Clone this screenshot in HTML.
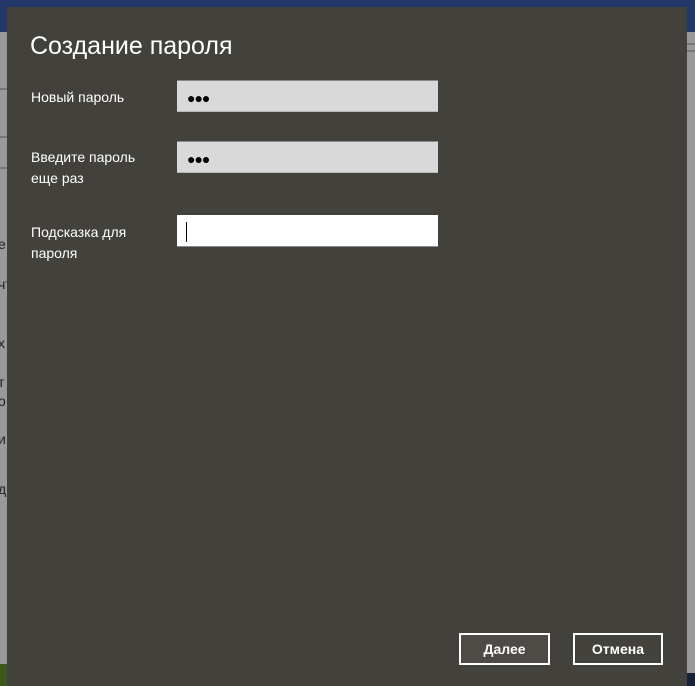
<!DOCTYPE html>
<html><head><meta charset="utf-8"><style>
*{margin:0;padding:0;box-sizing:border-box}
body{width:695px;height:686px;overflow:hidden;position:relative;background:#999;font-family:"Liberation Sans","DejaVu Sans",sans-serif}
.abs{position:absolute}
.dlg{left:7px;top:7px;width:680px;height:679px;background:#43413c}
.lbl{color:#fff;font-size:14px;line-height:21px;left:31px}
.inp{left:177px;width:261px;height:32px;background:#d9d9d9;border-top:1px solid #8a8a8a;border-bottom:1px solid #b8b8b8}
.dots{position:absolute;left:10px;top:9px;font-size:14px;letter-spacing:-1px;color:#000}
.btn{top:633px;height:32px;border:2px solid #fff;color:#fff;font-size:14px;font-weight:bold;text-align:center;line-height:28px}
.frag{color:#222;font-size:14px;left:-2px}
</style></head><body>
<div class="abs" style="left:0;top:0;width:695px;height:32px;background:#23386a"></div>
<div class="abs" style="left:0;top:88px;width:10px;height:2px;background:#777"></div>
<div class="abs" style="left:0;top:136px;width:10px;height:2px;background:#777"></div>
<div class="abs" style="left:0;top:167px;width:10px;height:2px;background:#777"></div>
<div class="abs" style="left:687px;top:43px;width:8px;height:2px;background:#777"></div>
<div class="abs" style="left:687px;top:50px;width:8px;height:2px;background:#777"></div>
<div class="abs" style="left:0;top:664px;width:7px;height:22px;background:#3d5a1c"></div>
<div class="abs" style="left:687px;top:673px;width:8px;height:13px;background:#162238"></div>
<div class="abs frag" style="top:236px">е</div>
<div class="abs frag" style="top:276px">чт</div>
<div class="abs frag" style="top:335px">х</div>
<div class="abs frag" style="top:374px">т</div>
<div class="abs frag" style="top:393px">о</div>
<div class="abs frag" style="top:431px">и</div>
<div class="abs frag" style="top:481px">д</div>
<div class="abs dlg"></div>
<div class="abs" style="left:30px;top:30px;color:#fff;font-size:25px;line-height:32px">Создание пароля</div>
<div class="abs lbl" style="top:87px">Новый пароль</div>
<div class="abs inp" style="top:80px"><span class="dots">●●●</span></div>
<div class="abs lbl" style="top:147px">Введите пароль<br>еще раз</div>
<div class="abs inp" style="top:141px"><span class="dots">●●●</span></div>
<div class="abs lbl" style="top:222px">Подсказка для<br>пароля</div>
<div class="abs inp" style="top:215px;background:#fff;border-top:1px solid #fff;border-bottom:1px solid #8a8a8a"><div style="position:absolute;left:9px;top:6px;width:1px;height:20px;background:#000"></div></div>
<div class="abs btn" style="left:459px;width:91px;background:#4e4a46">Далее</div>
<div class="abs btn" style="left:573px;width:90px">Отмена</div>
</body></html>
